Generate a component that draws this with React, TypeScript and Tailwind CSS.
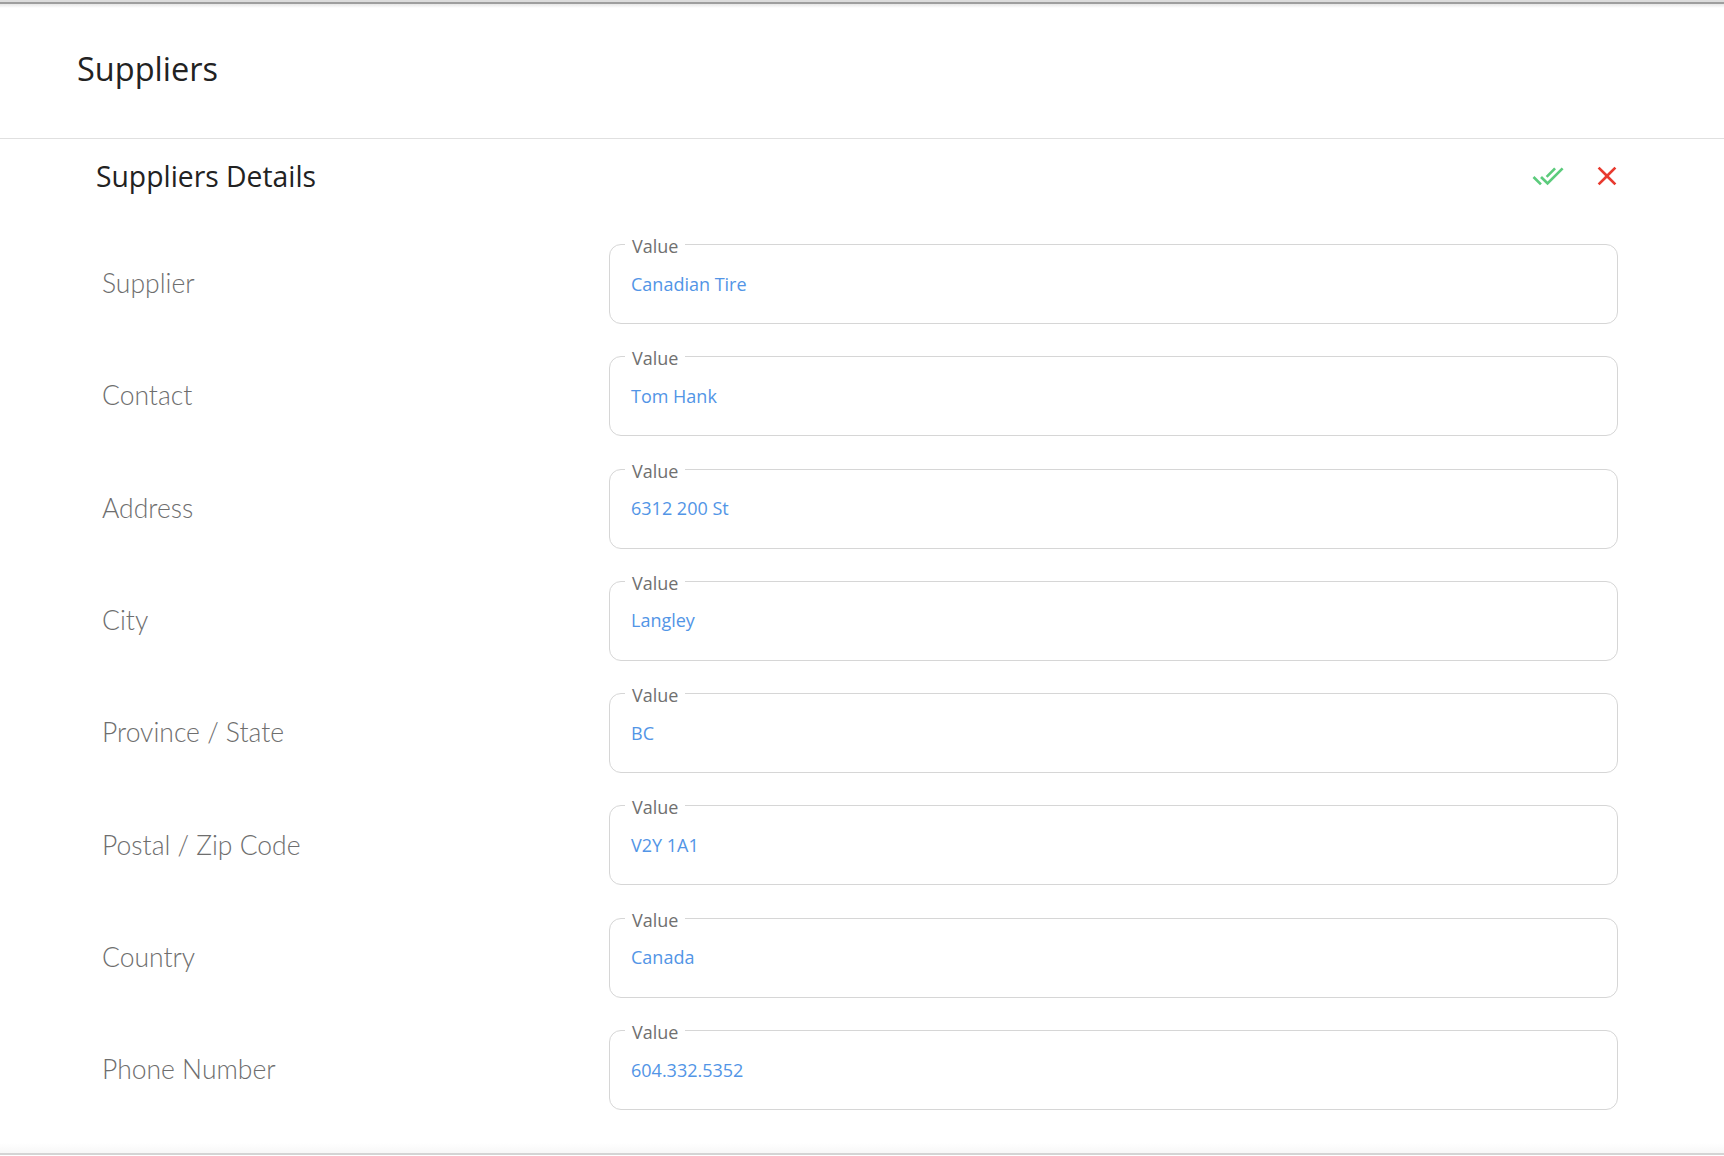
import React from "react";
import { MdDoneAll, MdClose } from "react-icons/md";

const rows: [string, string][] = [
  ["Supplier", "Canadian Tire"],
  ["Contact", "Tom Hank"],
  ["Address", "6312 200 St"],
  ["City", "Langley"],
  ["Province / State", "BC"],
  ["Postal / Zip Code", "V2Y 1A1"],
  ["Country", "Canada"],
  ["Phone Number", "604.332.5352"],
];

export default function App() {
  return (
    <div className="min-h-[1156px] bg-white font-['Open_Sans',sans-serif]">
      <div className="h-[139px] border-b border-[#e0e0e0]">
        <div className="h-[2px] bg-[#dcdcdc]" />
        <div className="h-[2px] bg-[#9e9e9e]" />
        <div className="h-[4px] bg-linear-to-b from-[#e6e6e6] to-white" />
        <div className="pl-[77px] pt-[41px] text-[32.5px] leading-[40px] text-[#222222]">Suppliers</div>
      </div>
      <div className="pl-[96px] pr-[106px] pt-[17px]">
        <div className="flex h-[40px] items-center">
          <div className="text-[28.3px] leading-[40px] text-[#222222]">Suppliers Details</div>
          <div className="ml-auto mr-[-5px] flex items-center gap-[27px]">
            <MdDoneAll className="h-[32px] w-[32px] text-[#5ccb7c]" />
            <MdClose className="h-[32px] w-[32px] text-[#e83a2f]" />
          </div>
        </div>
        <div className="mt-[48px] flex flex-col gap-[32.3px]">
          {rows.map(([label, value]) => (
            <div key={label} className="grid grid-cols-[513px_1fr] items-center">
              <div className="pl-[6px] font-['Lato',sans-serif] text-[26.5px] font-light text-[#6e6e6e]">{label}</div>
              <div className="relative flex h-[80px] items-center rounded-[12px] border border-[#d6d6d6] px-[21px]">
                <span className="absolute left-[15px] top-[-10px] bg-white px-[7px] text-[18px] leading-[22px] text-[#707070]">
                  Value
                </span>
                <span className="text-[18px] text-[#5295e6]">{value}</span>
              </div>
            </div>
          ))}
        </div>
      </div>
      <div className="mt-[33px] h-[10px] bg-linear-to-b from-white to-[#f7f7f7]" />
      <div className="h-[2px] bg-[#d4d4d4]" />
    </div>
  );
}
